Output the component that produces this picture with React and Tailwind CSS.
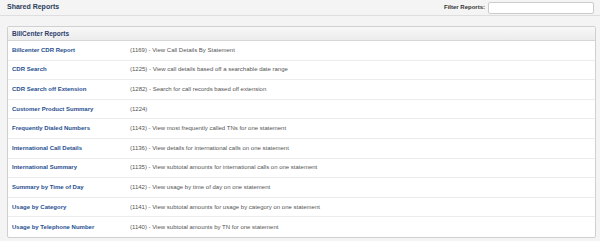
// App.jsx
const REPORTS = [
  { name: "Billcenter CDR Report", desc: "(1169) - View Call Details By Statement" },
  { name: "CDR Search", desc: "(1225) - View call details based off a searchable date range" },
  { name: "CDR Search off Extension", desc: "(1282) - Search for call records based off extension" },
  { name: "Customer Product Summary", desc: "(1224)" },
  { name: "Frequently Dialed Numbers", desc: "(1143) - View most frequently called TNs for one statement" },
  { name: "International Call Details", desc: "(1136) - View details for international calls on one statement" },
  { name: "International Summary", desc: "(1135) - View subtotal amounts for international calls on one statement" },
  { name: "Summary by Time of Day", desc: "(1142) - View usage by time of day on one statement" },
  { name: "Usage by Category", desc: "(1141) - View subtotal amounts for usage by category on one statement" },
  { name: "Usage by Telephone Number", desc: "(1140) - View subtotal amounts by TN for one statement" },
];

export default function App() {
  return (
    <div className="w-[600px] h-[241px] overflow-hidden bg-[#f4f4f4] font-['Liberation_Sans',Arial,sans-serif]">
      {/* top bar */}
      <div className="flex items-center justify-between h-[16px] pl-[7px] pr-[6px] border-b border-[#dedede]">
        <h1 className="text-[7px] font-bold text-[#2a3d5c]">Shared Reports</h1>
        <div className="flex items-center gap-[3px]">
          <span className="text-[6px] font-bold text-[#333]">Filter Reports:</span>
          <input className="w-[106px] h-[12px] bg-white border border-[#cccccc] rounded-[2px] outline-none" />
        </div>
      </div>

      {/* panel */}
      <div className="ml-[7px] mr-[4px] mt-[10px] bg-white border border-[#d0d0d0] rounded-[2px]">
        <div className="flex items-center h-[14px] pl-[4px] bg-gradient-to-b from-[#f8f8f8] to-[#ececec] border-b border-[#d6d6d6]">
          <span className="text-[6.5px] font-bold text-[#2a3d6c]">BillCenter Reports</span>
        </div>
        {REPORTS.map((r, i) => (
          <div
            key={r.name}
            className={
              "flex items-center h-[19.6px] pl-[4px] " +
              (i < REPORTS.length - 1 ? "border-b border-[#ececec]" : "")
            }
          >
            <span className="w-[118px] text-[6px] font-bold text-[#1f4f8f]">{r.name}</span>
            <span className="text-[6px] text-[#555]">{r.desc}</span>
          </div>
        ))}
      </div>
    </div>
  );
}
